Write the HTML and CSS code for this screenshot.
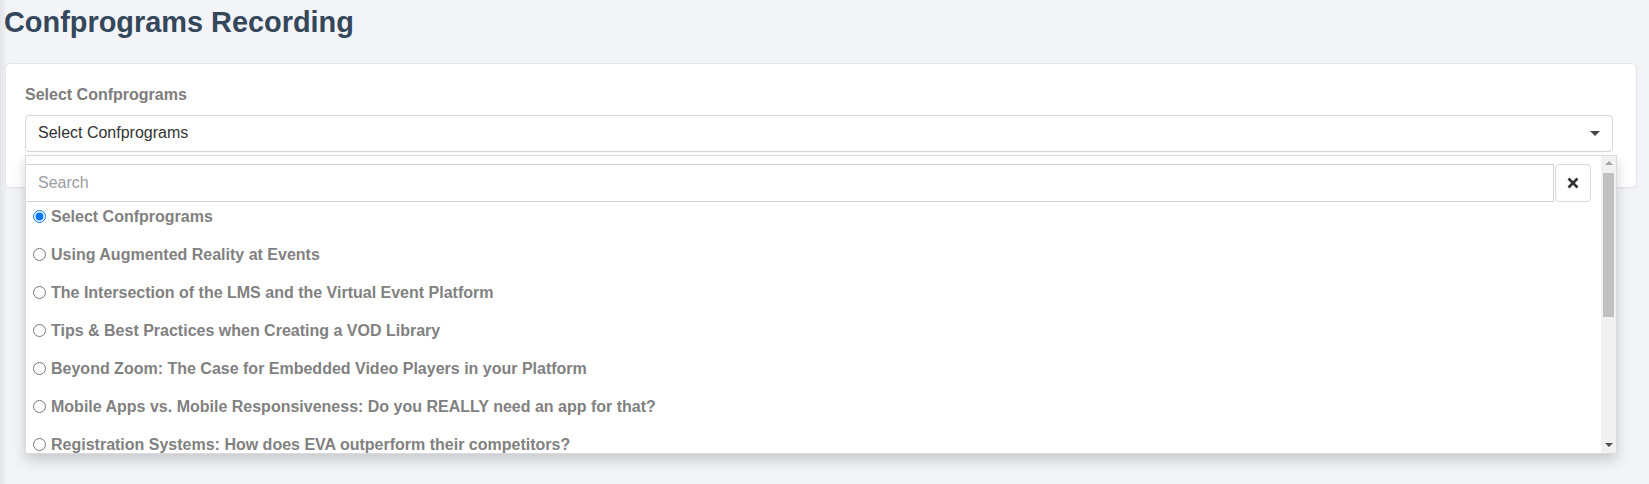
FILE: index.html
```html
<!DOCTYPE html>
<html lang="en">
<head>
    <meta charset="UTF-8">
    <meta name="viewport" content="width=device-width, initial-scale=1.0">
    <title>Confprograms Recording</title>
    <link rel="stylesheet" href="styles.css">
</head>
<body>
    <div class="page">
        <h1 class="page-title">Confprograms Recording</h1>

        <div class="card">
            <label class="field-label">Select Confprograms</label>
            <div class="select-wrap">
                <div class="select-box">
                    <span>Select Confprograms</span>
                    <span class="caret"></span>
                </div>

                <!-- menu aberto -->
                <div class="dropdown">
                    <div class="dropdown-body">
                        <div class="search-row">
                            <input class="search-input" type="text" placeholder="Search">
                            <button class="clear-btn" type="button">
                                <svg width="12" height="12" viewBox="0 0 12 12">
                                    <path d="M1.5 1.5 L10.5 10.5 M10.5 1.5 L1.5 10.5" stroke="#333" stroke-width="2.6" stroke-linecap="butt"/>
                                </svg>
                            </button>
                        </div>
                        <ul class="option-list">
                            <li><label><input type="radio" name="prog" checked> Select Confprograms</label></li>
                            <li><label><input type="radio" name="prog"> Using Augmented Reality at Events</label></li>
                            <li><label><input type="radio" name="prog"> The Intersection of the LMS and the Virtual Event Platform</label></li>
                            <li><label><input type="radio" name="prog"> Tips &amp; Best Practices when Creating a VOD Library</label></li>
                            <li><label><input type="radio" name="prog"> Beyond Zoom: The Case for Embedded Video Players in your Platform</label></li>
                            <li><label><input type="radio" name="prog"> Mobile Apps vs. Mobile Responsiveness: Do you REALLY need an app for that?</label></li>
                            <li><label><input type="radio" name="prog"> Registration Systems: How does EVA outperform their competitors?</label></li>
                        </ul>
                    </div>
                    <div class="scrollbar">
                        <div class="sb-btn"><span class="sb-up"></span></div>
                        <div class="sb-track">
                            <div class="sb-thumb"></div>
                        </div>
                        <div class="sb-btn"><span class="sb-down"></span></div>
                    </div>
                </div>
            </div>
        </div>
    </div>
</body>
</html>
```

FILE: styles.css
```css
body {
    margin: 0;
    font-family: "Liberation Sans", Arial, sans-serif;
    font-size: 16px;
    background: linear-gradient(to right, #e3e4e8 0, #f3f4f8 7px);
    height: 484px;
    overflow: hidden;
}
.page {
    padding: 0 12px 0 5px;
}
.page-title {
    margin: 5px 0 23px -1px;
    font-size: 28.9px;
    line-height: 1.2;
    font-weight: bold;
    color: #34475b;
}
.card {
    background-color: #fff;
    border: 1px solid #e4e6ea;
    border-radius: 5px;
    box-shadow: 0 1px 2px rgba(0, 0, 0, 0.04);
    padding: 21px 23px 35px 19px;
}
.field-label {
    display: block;
    font-weight: bold;
    line-height: 20px;
    color: #7d7d7d;
    margin-bottom: 10px;
}
.select-wrap {
    position: relative;
}
.select-box {
    height: 37px;
    box-sizing: border-box;
    border: 1px solid #d5d7db;
    border-radius: 4px;
    padding: 0 11px 0 12px;
    display: flex;
    align-items: center;
    justify-content: space-between;
    color: #333;
}
.caret {
    width: 0;
    height: 0;
    border-left: 5px solid transparent;
    border-right: 5px solid transparent;
    border-top: 5px solid #444;
    margin-right: 1px;
}
.dropdown {
    position: absolute;
    top: 40px;
    left: 0;
    right: -4px;
    height: 299px;
    box-sizing: border-box;
    background-color: #fff;
    border: 1px solid #d9dbdf;
    box-shadow: 0 6px 12px rgba(0, 0, 0, 0.175);
    display: flex;
    z-index: 10;
}
.dropdown-body {
    flex: 1;
    overflow: hidden;
}
.search-row {
    display: flex;
    gap: 1px;
    margin: 8px 10px 0 0;
}
.search-input {
    flex: 1;
    height: 38px;
    box-sizing: border-box;
    border: 1px solid #d0d3d8;
    padding: 0 12px;
    font-family: inherit;
    font-size: 16px;
    color: #333;
    outline: none;
    margin-left: -1px;
}
.search-input::placeholder {
    color: #9a9da3;
}
.clear-btn {
    width: 36px;
    height: 38px;
    box-sizing: border-box;
    border: 1px solid #d9dbdf;
    border-radius: 4px;
    background-color: #fff;
    display: flex;
    align-items: center;
    justify-content: center;
    padding: 0;
}
.option-list {
    list-style: none;
    margin: 0;
    padding: 1px 0 0 7px;
}
.option-list li {
    height: 28px;
    margin-bottom: 10px;
}
.option-list label {
    height: 28px;
    display: flex;
    align-items: center;
    gap: 5px;
    font-weight: bold;
    color: #818181;
    white-space: nowrap;
}
.option-list input {
    width: 13px;
    height: 13px;
    margin: 0;
    accent-color: #0075ff;
}
.scrollbar {
    width: 15px;
    background-color: #f1f1f1;
    display: flex;
    flex-direction: column;
}
.sb-btn {
    height: 15px;
    display: flex;
    align-items: center;
    justify-content: center;
}
.sb-up {
    width: 0;
    height: 0;
    border-left: 4px solid transparent;
    border-right: 4px solid transparent;
    border-bottom: 4px solid #a3a3a3;
}
.sb-down {
    width: 0;
    height: 0;
    border-left: 4px solid transparent;
    border-right: 4px solid transparent;
    border-top: 4px solid #505050;
}
.sb-track {
    flex: 1;
    padding: 2px 2px 0 2px;
}
.sb-thumb {
    height: 144px;
    background-color: #c1c1c1;
}
```
